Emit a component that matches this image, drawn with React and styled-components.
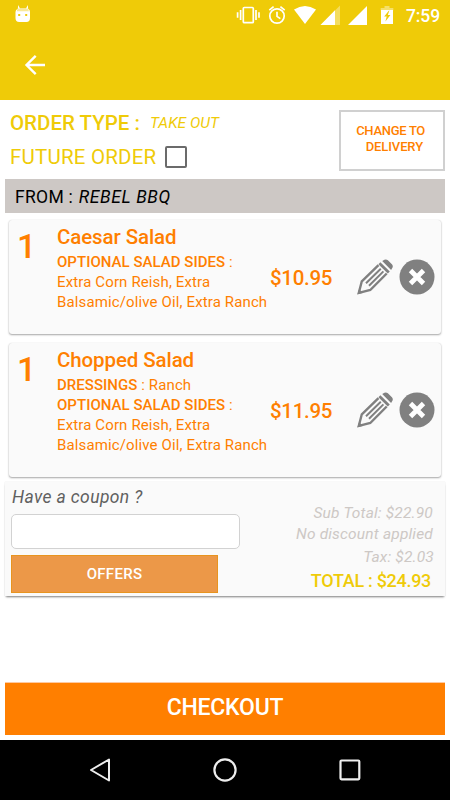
import React from 'react';
import styled, { createGlobalStyle } from 'styled-components';

const items = [
    {
        name: 'Caesar Salad',
        price: '$10.95',
        height: 114,
        groups: [
            { label: 'OPTIONAL SALAD SIDES', lines: ['Extra Corn Reish, Extra', 'Balsamic/olive Oil, Extra Ranch'] },
        ],
    },
    {
        name: 'Chopped Salad',
        price: '$11.95',
        height: 134,
        groups: [
            { label: 'DRESSINGS', inline: 'Ranch', lines: [] },
            { label: 'OPTIONAL SALAD SIDES', lines: ['Extra Corn Reish, Extra', 'Balsamic/olive Oil, Extra Ranch'] },
        ],
    },
];

const StatusIcons = () => (
    <svg width="170" height="30" viewBox="230 0 170 30" fill="none">
        <g stroke="#fff" strokeWidth="1.7">
            <rect x="243.3" y="7.5" width="10" height="15.2" rx="1" />
            <path d="M240.6 10v10M237.6 12.3v5.4M256 10v10M259 12.3v5.4" />
            <circle cx="277" cy="16" r="7.2" />
            <path d="M277 11.8v4.6l3.3 2.2M269.3 10.2l4.3-3.6M284.7 10.2l-4.3-3.6" />
        </g>
        <path fill="#fff" d="M305 24L294 9.6Q305 2.4 316 9.6Z" />
        <path fill="#fff" fillOpacity=".35" d="M340 5.5V25h-19.5z" />
        <path fill="#fff" d="M335 10.2V25h-14.5z" />
        <path fill="#fff" d="M367 6V25h-19z" />
        <path fill="#fff" fillOpacity=".4" d="M384.5 6h5v2h3.8v2.5h-12.6V8h3.8z" />
        <path fill="#fff" fillRule="evenodd" d="M381 10h12v14h-12zM389 10.5l-4.8 6h2.5l-1.3 5 5-6.5h-2.6l1.6-4.5z" />
    </svg>
);

const DroidIcon = () => (
    <svg width="16" height="18" viewBox="0 0 16 18">
        <path fill="#fff" d="M3.2 0L5 3.4H11L12.8 0l.4 4Q15 4.6 15 7v6q0 4-3.6 4H4.2Q.5 17 .5 13V7Q.5 4.6 2.8 4z" />
        <path fill="#f8e89a" d="M2.8 3.5h10L14 6.2H1.6z" />
        <path fill="#EFCB08" d="M3.2 9h2v2h-2zM10.2 9h2v2h-2z" />
    </svg>
);

const BackIcon = () => (
    <svg width="22" height="22" viewBox="0 0 22 22" fill="none" stroke="#fff" strokeWidth="2.4">
        <path d="M21 11H3M11.7 1.8L2.5 11l9.2 9.2" />
    </svg>
);

const PencilIcon = () => (
    <svg width="36" height="36" viewBox="0 0 36 36" fill="none" stroke="#808080" strokeWidth="2.4">
        <path d="M21.5 6.2L4.8 22.3L1.8 33.8L13.3 31L29.7 14.5" />
        <path d="M23.8 9.7L9 24.2M26.4 12.4L12 26.8" strokeWidth="2" />
        <path d="M.6 35.3l1.5-5.2 3.7 3.8z" fill="#808080" stroke="none" />
        <path d="M22.4 4.2L31.8 13.6" strokeWidth="2.8" />
        <path d="M25.2 2l2.2-1.2q1.8-1 3.5.5l4 4q1.5 1.7.5 3.5l-1.3 2.1z" fill="#808080" stroke="none" />
    </svg>
);

const RemoveIcon = () => (
    <svg width="36" height="36" viewBox="0 0 36 36">
        <circle cx="18" cy="18" r="17.5" fill="#808080" />
        <path d="M11.5 11.5l13 13M24.5 11.5l-13 13" stroke="#fff" strokeWidth="4.8" />
    </svg>
);

const OrderItem = ({ item }) => (
    <ItemCard $height={item.height}>
        <Quantity>1</Quantity>
        <Details>
            <ItemName>{item.name}</ItemName>
            {item.groups.map((group) => (
                <React.Fragment key={group.label}>
                    <Option><b>{group.label}</b> : {group.inline}</Option>
                    {group.lines.map((line) => <Option key={line}>{line}</Option>)}
                </React.Fragment>
            ))}
        </Details>
        <Price>{item.price}</Price>
        <Actions>
            <IconButton aria-label="Edit"><PencilIcon /></IconButton>
            <IconButton aria-label="Remove"><RemoveIcon /></IconButton>
        </Actions>
    </ItemCard>
);

const App = () => {
    return (
        <>
            <GlobalStyle />
            <Screen>
                <StatusBar>
                    <DroidIcon />
                    <StatusRight>
                        <StatusIcons />
                        <Clock>7:59</Clock>
                    </StatusRight>
                </StatusBar>
                <AppBar>
                    <IconButton aria-label="Back"><BackIcon /></IconButton>
                </AppBar>

                <Content>
                    <OrderHeader>
                        <div>
                            <OrderType>ORDER TYPE : <em>TAKE OUT</em></OrderType>
                            <FutureOrder>FUTURE ORDER <Checkbox /></FutureOrder>
                        </div>
                        <ChangeButton>
                            <span>CHANGE TO</span>
                            <span>DELIVERY</span>
                        </ChangeButton>
                    </OrderHeader>
                    <FromBar>FROM : <em>REBEL BBQ</em></FromBar>

                    <ItemList>
                        {items.map((item) => <OrderItem key={item.name} item={item} />)}
                    </ItemList>

                    <Summary>
                        <Coupon>
                            <CouponLabel>Have a coupon ?</CouponLabel>
                            <CouponInput />
                            <OffersButton>OFFERS</OffersButton>
                        </Coupon>
                        <Totals>
                            <TotalLine>Sub Total: $22.90</TotalLine>
                            <TotalLine $gap="1px">No discount applied</TotalLine>
                            <TotalLine $gap="3px" $shift="-1px">Tax: $2.03</TotalLine>
                            <GrandTotal>TOTAL : $24.93</GrandTotal>
                        </Totals>
                    </Summary>

                    <CheckoutButton>CHECKOUT</CheckoutButton>
                </Content>

                <NavBar>
                    <svg width="24" height="26" viewBox="0 0 24 26" fill="none" stroke="#eee" strokeWidth="2" strokeLinejoin="round">
                        <path d="M21 2.5V23.5L3 13z" />
                    </svg>
                    <svg width="24" height="26" viewBox="0 0 24 26" fill="none" stroke="#eee" strokeWidth="2.2">
                        <circle cx="12" cy="13" r="10.6" />
                    </svg>
                    <svg width="24" height="26" viewBox="0 0 24 26" fill="none" stroke="#eee" strokeWidth="2.2">
                        <rect x="2.5" y="3.5" width="18.8" height="18.8" rx="1" />
                    </svg>
                </NavBar>
            </Screen>
        </>
    );
}

const GlobalStyle = createGlobalStyle`
    * {
        box-sizing: border-box;
    }

    body {
        margin: 0;
        background: #fff;
        font-family: Roboto, sans-serif;
    }

    button {
        font-family: inherit;
    }
`;

const Screen = styled.div`
    width: 450px;
    height: 800px;
    display: flex;
    flex-direction: column;
    overflow: hidden;
    white-space: nowrap;
`;

const StatusBar = styled.div`
    height: 30px;
    display: flex;
    align-items: center;
    justify-content: space-between;
    padding: 0 10px 0 15px;
    background: #EFCB08;

    > svg {
        margin-top: -2px;
    }
`;

const StatusRight = styled.div`
    display: flex;
    align-items: center;
`;

const Clock = styled.span`
    width: 34px;
    color: #fff;
    font-size: 17.5px;
    font-weight: 500;
    letter-spacing: -.1px;
    line-height: 30px;
    padding-top: 1px;
    margin-left: 6px;
`;

const AppBar = styled.div`
    height: 70px;
    display: flex;
    align-items: center;
    padding-left: 24px;
    background: #EFCB08;
`;

const IconButton = styled.button`
    display: flex;
    padding: 0;
    border: 0;
    background: none;
`;

const Content = styled.main`
    flex: 1;
    display: flex;
    flex-direction: column;
    padding: 10px 5px 5px;
`;

const OrderHeader = styled.div`
    display: flex;
    justify-content: space-between;
    height: 69px;
    padding-left: 5px;
    color: #EFCB08;
`;

const OrderType = styled.div`
    height: 26px;
    font-size: 20.5px;
    font-weight: 500;
    line-height: 26px;

    em {
        margin-left: 5px;
        font-size: 15.5px;
        font-weight: 400;
        vertical-align: 2px;
    }
`;

const FutureOrder = styled.div`
    display: flex;
    align-items: center;
    gap: 9px;
    margin-top: 8px;
    font-size: 20.5px;
    letter-spacing: .2px;
    line-height: 26px;
`;

const Checkbox = styled.span`
    width: 22px;
    height: 22px;
    margin-top: -1px;
    border: 2px solid #6b6b6b;
    border-radius: 2px;
`;

const ChangeButton = styled.button`
    width: 106px;
    height: 61px;
    display: flex;
    flex-direction: column;
    align-items: flex-end;
    padding: 11px 18px 0;
    border: 2px solid #d0d0d0;
    background: #fff;
    color: #FF7F00;
    font-size: 13px;
    font-weight: 500;
    letter-spacing: -.3px;
    line-height: 16px;

    span:last-child {
        margin-right: 2px;
        letter-spacing: -.1px;
    }
`;

const FromBar = styled.div`
    height: 34px;
    padding-left: 10px;
    background: #CDC8C5;
    color: #000;
    font-size: 17.5px;
    letter-spacing: .3px;
    line-height: 36px;

    em {
        margin-left: 1px;
        letter-spacing: .6px;
    }
`;

const ItemList = styled.div`
    display: flex;
    flex-direction: column;
    gap: 9px;
    padding: 7px 4px 0;
`;

const ItemCard = styled.div`
    display: flex;
    height: ${({ $height }) => $height}px;
    padding: 5px 6px 0 9px;
    border-radius: 3px;
    background: #fafafa;
    color: #FF7F00;
    box-shadow: 0 1px 2px rgba(0, 0, 0, .35), 0 0 1px rgba(0, 0, 0, .15);
`;

const Quantity = styled.div`
    width: 39px;
    margin-left: -1px;
    margin-right: 1px;
    padding-top: 1px;
    font-size: 34px;
    font-weight: 500;
    line-height: 40px;
`;

const Details = styled.div`
    width: 213px;
`;

const ItemName = styled.div`
    margin-bottom: 3px;
    font-size: 20.5px;
    font-weight: 500;
    letter-spacing: -.1px;
    line-height: 24px;
`;

const Option = styled.div`
    font-size: 15px;
    letter-spacing: .13px;
    line-height: 20px;

    b {
        font-weight: 500;
        letter-spacing: .03px;
    }
`;

const Price = styled.div`
    align-self: center;
    width: 87px;
    font-size: 20.5px;
    font-weight: 500;
    letter-spacing: -.3px;
    line-height: 24px;
    padding-bottom: 4px;
`;

const Actions = styled.div`
    align-self: center;
    display: flex;
    gap: 6px;
    padding-bottom: 5px;
`;

const Summary = styled.section`
    display: flex;
    justify-content: space-between;
    height: 114px;
    margin-top: 5px;
    padding: 0 12px 0 6px;
    background: #fafafa;
    box-shadow: 0 2px 2px -1px rgba(0, 0, 0, .5), 0 0 1px rgba(0, 0, 0, .15);
`;

const Coupon = styled.div`
    width: 229px;
`;

const CouponLabel = styled.div`
    height: 32px;
    padding-left: 1px;
    color: #606060;
    font-size: 17.5px;
    font-style: italic;
    letter-spacing: .38px;
    line-height: 30px;
`;

const CouponInput = styled.input`
    display: block;
    width: 229px;
    height: 35px;
    border: 1px solid #d2d2d2;
    border-radius: 5px;
    background: #fff;
`;

const OffersButton = styled.button`
    display: block;
    width: 207px;
    height: 38px;
    margin-top: 6px;
    padding: 0;
    border: 1px solid #E8941F;
    background: #EC9848;
    color: #fff;
    font-size: 15px;
    font-weight: 500;
    letter-spacing: .3px;
`;

const Totals = styled.div`
    display: flex;
    flex-direction: column;
    align-items: flex-end;
    padding-top: 21px;
`;

const TotalLine = styled.div`
    margin-top: ${({ $gap }) => $gap || '0'};
    margin-right: ${({ $shift }) => $shift || '0'};
    color: #CDC8C5;
    font-size: 15.5px;
    font-style: italic;
    letter-spacing: .18px;
    line-height: 20px;
`;

const GrandTotal = styled.div`
    margin-top: 2px;
    margin-right: 2px;
    color: #EFCB08;
    font-size: 18px;
    font-weight: 500;
    letter-spacing: -.3px;
    line-height: 24px;
`;

const CheckoutButton = styled.button`
    height: 53px;
    margin-top: auto;
    padding: 0 0 4px;
    border: 0;
    border-top: 1px solid #ffc9a0;
    background: #FF7F00;
    color: #fff;
    font-size: 23px;
    font-weight: 500;
    letter-spacing: -.25px;
`;

const NavBar = styled.nav`
    height: 60px;
    display: flex;
    align-items: center;
    justify-content: center;
    gap: 101px;
    background: #000;
`;

export default App;
